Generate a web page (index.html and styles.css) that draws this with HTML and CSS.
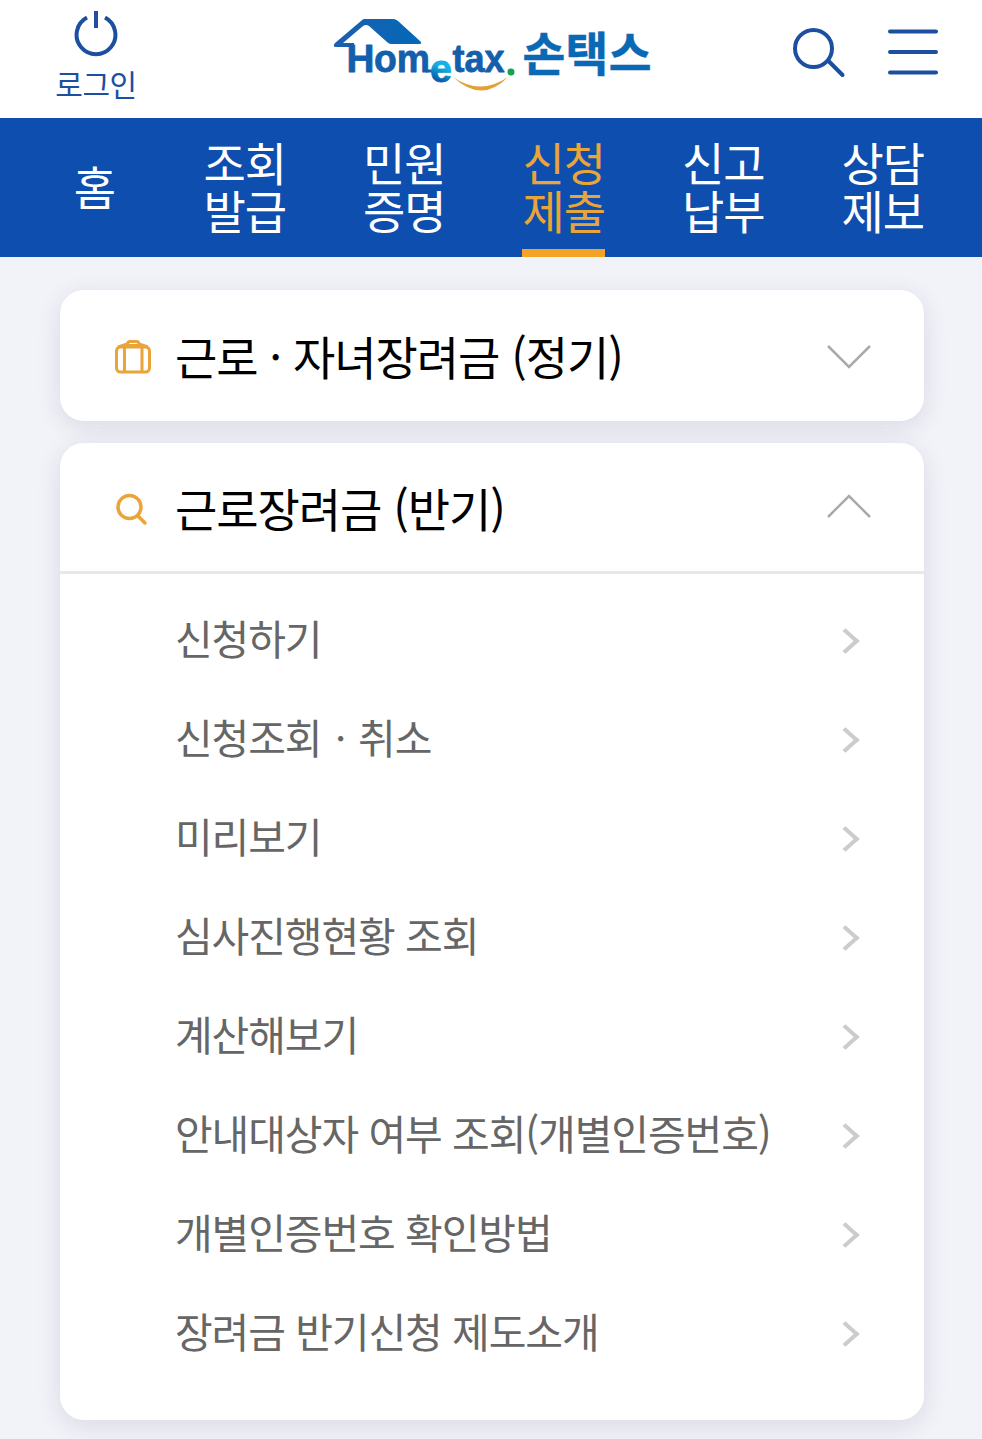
FILE: index.html
```html
<!DOCTYPE html>
<html lang="ko">
<head>
    <meta charset="UTF-8">
    <meta name="viewport" content="width=device-width, initial-scale=1.0">
    <title>손택스</title>
    <link rel="stylesheet" href="styles.css">
</head>
<body>
    <header class="header">
        <a class="login">
            <svg width="46" height="46" viewBox="0 0 46 46" fill="none" stroke="#1c4f9f" stroke-width="4">
                <path d="M14 6.6A19.4 19.4 0 1 0 32 6.6M23 0V17"/>
            </svg>
            <span>로그인</span>
        </a>
        <svg class="logo" width="330" height="90" viewBox="328 8 330 90">
            <defs>
                <linearGradient id="roof" x1="0" x2="1">
                    <stop offset="0" stop-color="#1d5fae"/>
                    <stop offset="1" stop-color="#0269b8"/>
                </linearGradient>
                <linearGradient id="eblue" gradientUnits="userSpaceOnUse" x1="436" y1="81" x2="444" y2="62">
                    <stop offset="0.1" stop-color="#0a5fae"/>
                    <stop offset="0.75" stop-color="#12b1e4"/>
                </linearGradient>
            </defs>
            <path fill="url(#roof)" d="M364 19H393Q396 19 398 21L420 41Q423 44 419 44H391Q389 44 387 42L369 26Q366 24 363 26L343 43H354V47H336Q332 47 335 43L361 21Q363 19 364 19Z"/>
            <g class="logo-en">
                <text x="346.5" y="72" font-size="39" textLength="28" lengthAdjust="spacingAndGlyphs">H</text>
                <text x="374" y="72" font-size="39" textLength="56" lengthAdjust="spacingAndGlyphs">om</text>
                <path d="M426 71H433" stroke="#145fac" stroke-width="3"/>
                <text class="logo-e" x="430" y="82" font-size="38" textLength="22" lengthAdjust="spacingAndGlyphs">e</text>
                <text x="452.5" y="72" font-size="38" textLength="52" lengthAdjust="spacingAndGlyphs">tax</text>
            </g>
            <circle cx="511" cy="72" r="3.5" fill="#16a34b"/>
            <path fill="#e3a03a" d="M453 77Q480 96 508 77Q482 104 453 77Z"/>
            <text class="logo-ko" x="522.5" y="70.5" font-size="46.5" textLength="129">손택스</text>
        </svg>
        <div class="tools">
            <svg width="54" height="54" viewBox="0 0 54 54" fill="none" stroke="#1c4f9f" stroke-width="4" stroke-linecap="round">
                <circle cx="20.5" cy="22.5" r="18.5"/>
                <path d="M35.5 35L49.5 49"/>
            </svg>
            <svg width="50" height="46" viewBox="0 0 50 46" stroke="#1c4f9f" stroke-width="4" stroke-linecap="round">
                <path d="M2 2.5H48M2 23H48M2 43.5H48"/>
            </svg>
        </div>
    </header>

    <nav class="nav">
        <a class="home">홈</a>
        <a>조회<br>발급</a>
        <a>민원<br>증명</a>
        <a class="active">신청<br>제출</a>
        <a>신고<br>납부</a>
        <a>상담<br>제보</a>
    </nav>

    <main>
        <section class="card">
            <h2 class="card-title">
                <svg class="card-icon" width="38" height="36" viewBox="0 0 38 36" fill="none" stroke="#e9a43a" stroke-width="3" stroke-linejoin="round">
                    <rect x="2.5" y="8" width="33" height="25" rx="4"/>
                    <path d="M10.5 8V33M28 8V33M4 8L13.5 5Q13.5 2.500 16.5 2.500H22Q25 2.500 25 5L34 8M13 6.5H25"/>
                </svg>
                <span>근로 · 자녀장려금 (정기)</span>
                <svg class="arrow" width="44" height="24" viewBox="0 0 44 24" fill="none" stroke="#aaa" stroke-width="2.5">
                    <path d="M1 1L22 22L43 1"/>
                </svg>
            </h2>
        </section>

        <section class="card">
            <h2 class="card-title open">
                <svg class="card-icon" width="38" height="36" viewBox="0 0 38 36" fill="none" stroke="#e9a43a" stroke-width="3.5" stroke-linecap="round">
                    <circle cx="15.5" cy="15" r="11.5"/>
                    <path d="M24 24L31 31"/>
                </svg>
                <span>근로장려금 (반기)</span>
                <svg class="arrow" width="44" height="24" viewBox="0 0 44 24" fill="none" stroke="#aaa" stroke-width="2.5">
                    <path d="M1 23L22 2L43 23"/>
                </svg>
            </h2>
            <ul class="menu">
                <li>신청하기</li>
                <li>신청조회ㆍ취소</li>
                <li>미리보기</li>
                <li>심사진행현황 조회</li>
                <li>계산해보기</li>
                <li>안내대상자 여부 조회(개별인증번호)</li>
                <li>개별인증번호 확인방법</li>
                <li>장려금 반기신청 제도소개</li>
            </ul>
        </section>
    </main>
</body>
</html>
```
FILE: styles.css
```css
* { box-sizing: border-box; }
body {
    margin: 0;
    height: 1439px;
    overflow: hidden;
    background-color: #f2f3f9;
    font-family: "Noto Sans CJK KR", sans-serif;
}
.header {
    display: flex;
    align-items: flex-start;
    height: 118px;
    background-color: #fff;
}
.login {
    display: flex;
    flex-direction: column;
    align-items: center;
    width: 192px;
    padding-top: 11px;
    color: #1c4f9f;
    font-size: 30px;
    line-height: 44px;
    letter-spacing: -0.5px;
}
.login span { margin-top: 4px; }
.logo { margin: 8px 0 0 136px; }
.logo-en {
    font-family: "Liberation Sans", Arial, sans-serif;
    font-weight: bold;
    fill: #145fac;
}
.logo-en text {
    stroke: #145fac;
    stroke-width: 0.8;
    stroke-linejoin: round;
}
.logo-en .logo-e { fill: url(#eblue); stroke: url(#eblue); }
.logo-ko { font-weight: 700; fill: #0a69b5; stroke: #0a69b5; stroke-width: 0.5; }
.tools {
    display: flex;
    gap: 41px;
    margin-left: auto;
    padding: 26px 44px 0 0;
}
.tools svg:last-child { margin-top: 3px; }

.nav {
    display: grid;
    grid-template-columns: 165px repeat(5, 159.5px);
    height: 138.5px;
    background-color: #0e4eae;
    color: #fff;
    font-size: 46px;
    line-height: 48px;
    letter-spacing: -1px;
}
.nav a {
    display: flex;
    align-items: center;
    justify-content: center;
    padding-bottom: 4px;
}
.nav .home { padding-left: 24px; }
.nav .active {
    justify-self: center;
    border-bottom: 8px solid #f3a426;
    padding: 4px 0 0;
    color: #e9a43a;
}

main { padding: 33.5px 58px 0 60px; }
.card {
    margin-bottom: 22px;
    border-radius: 24px;
    background-color: #fff;
    box-shadow: 0 6px 24px rgba(40, 45, 65, 0.12);
}
.card-title {
    display: flex;
    align-items: center;
    height: 131px;
    margin: 0;
    padding: 2px 53px 0 54px;
    font-size: 46px;
    font-weight: 400;
    letter-spacing: -1.05px;
    color: #000;
}
.card-title span { padding-bottom: 3px; }
.card-title.open {
    padding-top: 1px;
    border-bottom: 3px solid #e7e8ea;
}
.card-title.open span { padding-bottom: 2px; }
.card-title.open .card-icon { margin-top: 4px; }
.card-title.open .arrow { margin-top: -3px; }
.card-icon { margin-right: 23px; }
.arrow { margin-left: auto; }
.menu {
    list-style: none;
    margin: 0;
    padding: 17px 65px 37px 115px;
}
.menu li {
    display: flex;
    align-items: center;
    justify-content: space-between;
    height: 99px;
    padding-bottom: 8px;
    font-size: 41px;
    letter-spacing: -1.1px;
    color: #666;
}
.menu li::after {
    content: "";
    width: 15px;
    height: 15px;
    border: solid #ccc;
    border-width: 4px 4px 0 0;
    transform: translate(-4px, 4.5px) rotate(45deg) skew(-3deg, -3deg);
}
```
